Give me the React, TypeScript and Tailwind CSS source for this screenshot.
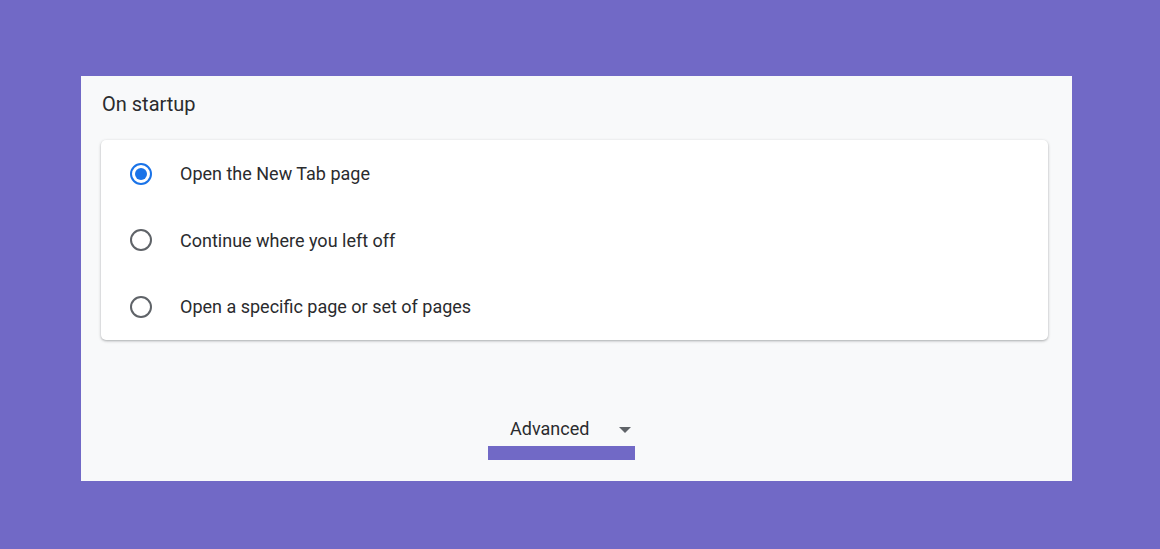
export default function App() {
  const rows = [
    { label: "Open the New Tab page", checked: true, h: "h-[67px]" },
    { label: "Continue where you left off", checked: false, h: "h-[66px]" },
    { label: "Open a specific page or set of pages", checked: false, h: "h-[67px]" },
  ];
  return (
    <div
      className="w-[1160px] h-[549px] bg-[#7169c6] pt-[76px] pl-[81px]"
      style={{ fontFamily: "Roboto, 'Liberation Sans', sans-serif" }}
    >
      <div className="w-[991px] h-[405px] bg-[#f8f9fa] flex flex-col">
        <div className="h-[64px] pl-[21px] pt-[15px] text-[20px] leading-[26px] text-[#2a2b2e]">
          On startup
        </div>
        <div className="ml-[20px] w-[947px] bg-white rounded-[5px] shadow-[0_1px_3px_rgba(60,64,67,0.3),0_1px_2px_rgba(60,64,67,0.15)] flex flex-col">
          {rows.map((r) => (
            <div key={r.label} className={`${r.h} flex items-center pl-[29px]`}>
              <div
                className={`w-[22px] h-[22px] rounded-full border-[2.5px] flex items-center justify-center ${
                  r.checked ? "border-[#1a73e8]" : "border-[#5f6368]"
                }`}
              >
                {r.checked && <div className="w-[12px] h-[12px] rounded-full bg-[#1a73e8]" />}
              </div>
              <span className="ml-[28px] text-[18px] text-[#2a2b2e]">{r.label}</span>
            </div>
          ))}
        </div>
        <div className="mt-[76px] pl-[407px] flex flex-col items-start">
          <div className="flex items-center h-[26px] pl-[22px]">
            <span className="text-[18px] leading-[26px] text-[#2a2b2e]">Advanced</span>
            <svg width="12" height="6" viewBox="0 0 12 6" className="ml-[30px] mt-[1px]">
              <path d="M0 0 L12 0 L6 6 Z" fill="#5f6368" />
            </svg>
          </div>
          <div className="mt-[4px] w-[147px] h-[14px] bg-[#7169c6]" />
        </div>
      </div>
    </div>
  );
}
